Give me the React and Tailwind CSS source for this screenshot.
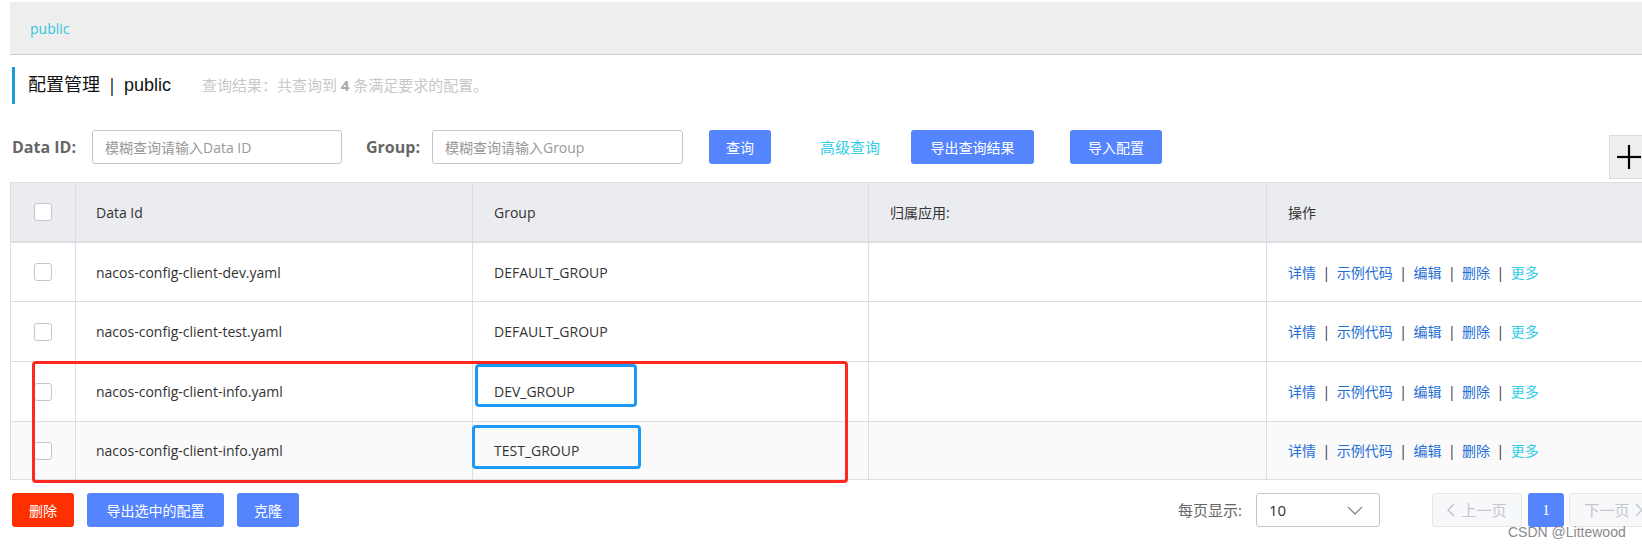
import React from "react";

const rows = [
  { id: "nacos-config-client-dev.yaml", group: "DEFAULT_GROUP", h: "h-[59px]", bg: "bg-white" },
  { id: "nacos-config-client-test.yaml", group: "DEFAULT_GROUP", h: "h-[60px]", bg: "bg-white" },
  { id: "nacos-config-client-info.yaml", group: "DEV_GROUP", h: "h-[60px]", bg: "bg-white" },
  { id: "nacos-config-client-info.yaml", group: "TEST_GROUP", h: "h-[58px]", bg: "bg-[#fafafa]" },
];

const Checkbox = () => (
  <span className="block w-[18px] h-[18px] rounded-[3px] border border-[#c4c6cf] bg-white" />
);

const Sep = () => <span className="mx-[6.5px] text-[#333]">|</span>;

const Actions = () => (
  <div className="flex items-center whitespace-nowrap text-[14px] text-[#1f6fd6]">
    <span>详情</span>
    <Sep />
    <span>示例代码</span>
    <Sep />
    <span>编辑</span>
    <Sep />
    <span>删除</span>
    <Sep />
    <span className="text-[#33cde5]">更多</span>
  </div>
);

const Btn = ({ children, className }) => (
  <button className={"shrink-0 whitespace-nowrap h-[34px] rounded-[3px] text-white text-[14px] " + className}>{children}</button>
);

export default function App() {
  return (
    <div className="relative w-[1642px] h-[546px] overflow-hidden bg-white [font-family:'Open_Sans','Noto_Sans_CJK_SC',sans-serif]">
      <div className="pt-[2px] pl-[10px]">
        {/* namespace bar */}
        <div className="h-[53px] bg-[#eeeeee] border-b border-[#cccccc] flex items-center pl-[20px]">
          <span className="text-[14px] text-[#33c3e0]">public</span>
        </div>

        {/* title */}
        <div className="mt-[12px] ml-[2px] h-[37px] border-l-[3px] border-[#1a9ed8] flex items-center pl-[13px] whitespace-nowrap">
          <span className="text-[18px] text-[#111] [font-family:'Liberation_Sans','Noto_Sans_CJK_SC',sans-serif]">配置管理</span>
          <span className="text-[18px] text-[#111] mx-[7px]">|</span>
          <span className="text-[18px] text-[#111] [font-family:'Liberation_Sans',sans-serif]">public</span>
          <span className="ml-[31px] text-[15px] text-[#c8c8c8]">
            查询结果：共查询到 <b className="text-[#aaa]">4</b> 条满足要求的配置。
          </span>
        </div>

        {/* search row */}
        <div className="mt-[26px] flex items-center h-[34px] whitespace-nowrap">
          <span className="shrink-0 ml-[2px] text-[16px] font-bold text-[#666]">Data ID:</span>
          <div className="shrink-0 ml-[16px] w-[250px] h-[34px] border border-[#c4c6cf] rounded-[3px] flex items-center pl-[12px] text-[14px] text-[#999]">
            模糊查询请输入Data ID
          </div>
          <span className="shrink-0 ml-[24px] text-[16px] font-bold text-[#666]">Group:</span>
          <div className="shrink-0 ml-[12px] w-[251px] h-[34px] border border-[#c4c6cf] rounded-[3px] flex items-center pl-[12px] text-[14px] text-[#999]">
            模糊查询请输入Group
          </div>
          <Btn className="ml-[26px] w-[62px] bg-[#5584ff]">查询</Btn>
          <span className="shrink-0 ml-[49px] text-[15px] text-[#33cde5]">高级查询</span>
          <Btn className="ml-[31px] w-[123px] bg-[#5584ff]">导出查询结果</Btn>
          <Btn className="ml-[36px] w-[92px] bg-[#5584ff]">导入配置</Btn>
        </div>

        {/* table */}
        <div className="mt-[18px] w-[1700px] border-t border-l border-[#dcdee3] text-[14px] text-[#333]">
          <div className="grid grid-cols-[65px_397px_396px_398px_398px] h-[60px] bg-[#ebecf0] border-b-2 border-[#dcdee3]">
            <div className="border-r border-[#dcdee3] flex items-center justify-center"><Checkbox /></div>
            <div className="border-r border-[#dcdee3] flex items-center pl-[20px]">Data Id</div>
            <div className="border-r border-[#dcdee3] flex items-center pl-[21px]">Group</div>
            <div className="border-r border-[#dcdee3] flex items-center pl-[21px]">归属应用:</div>
            <div className="flex items-center pl-[21px]">操作</div>
          </div>
          {rows.map((r, i) => (
            <div key={i} className={"grid grid-cols-[65px_397px_396px_398px_398px] border-b border-[#dcdee3] " + r.h + " " + r.bg}>
              <div className="border-r border-[#dcdee3] flex items-center justify-center"><Checkbox /></div>
              <div className="border-r border-[#dcdee3] flex items-center pl-[20px]">{r.id}</div>
              <div className="border-r border-[#dcdee3] flex items-center pl-[21px]">{r.group}</div>
              <div className="border-r border-[#dcdee3]" />
              <div className="flex items-center pl-[21px]"><Actions /></div>
            </div>
          ))}
        </div>

        {/* footer */}
        <div className="mt-[13px] flex items-center whitespace-nowrap">
          <Btn className="ml-[2px] w-[62px] bg-[#ff3000]">删除</Btn>
          <Btn className="ml-[13px] w-[137px] bg-[#5584ff]">导出选中的配置</Btn>
          <Btn className="ml-[13px] w-[62px] bg-[#5584ff]">克隆</Btn>
          <span className="shrink-0 ml-[879px] text-[15px] text-[#666]">每页显示:</span>
          <div className="shrink-0 ml-[14px] w-[124px] h-[34px] border border-[#c4c6cf] rounded-[3px] flex items-center justify-between pl-[12px] pr-[16px] text-[15px] text-[#333]">
            <span>10</span>
            <svg width="16" height="9" viewBox="0 0 16 9" fill="none" stroke="#888" strokeWidth="1.3">
              <polyline points="1,1 8,8 15,1" />
            </svg>
          </div>
          <div className="shrink-0 ml-[52px] w-[90px] h-[34px] border border-[#e6e7eb] bg-[#f7f8fa] rounded-[3px] flex items-center justify-center gap-[6px] text-[15px] text-[#c4c6cf]">
            <svg width="8" height="14" viewBox="0 0 8 14" fill="none" stroke="#c4c6cf" strokeWidth="1.5">
              <polyline points="7,1 1,7 7,13" />
            </svg>
            <span>上一页</span>
          </div>
          <div className="shrink-0 ml-[6px] w-[36px] h-[34px] rounded-[3px] bg-[#5584ff] text-white text-[15px] flex items-center justify-center [font-family:'Liberation_Serif',serif]">1</div>
          <div className="shrink-0 ml-[5px] w-[90px] h-[34px] border border-[#e6e7eb] bg-[#f7f8fa] rounded-[3px] flex items-center justify-center gap-[6px] text-[15px] text-[#c4c6cf]">
            <span>下一页</span>
            <svg width="8" height="14" viewBox="0 0 8 14" fill="none" stroke="#c4c6cf" strokeWidth="1.5">
              <polyline points="1,1 7,7 1,13" />
            </svg>
          </div>
        </div>
      </div>

      {/* floating plus */}
      <div className="absolute left-[1609px] top-[135px] w-[40px] h-[44px] bg-[#eeeeee] border border-[#dddddd] flex items-center justify-center">
        <svg width="26" height="26" viewBox="0 0 26 26" stroke="#000" strokeWidth="2.2">
          <line x1="13" y1="1" x2="13" y2="25" />
          <line x1="1" y1="13" x2="25" y2="13" />
        </svg>
      </div>

      {/* annotations */}
      <div className="absolute left-[32px] top-[361px] w-[816px] h-[122px] border-[3px] border-[#ff2a1f] rounded-[4px]" />
      <div className="absolute left-[475px] top-[364px] w-[162px] h-[43px] border-[3px] border-[#1e98f5] rounded-[4px]" />
      <div className="absolute left-[472px] top-[425px] w-[169px] h-[44px] border-[3px] border-[#1e98f5] rounded-[4px]" />

      {/* watermark */}
      <div className="absolute left-[1508px] top-[524px] whitespace-nowrap text-[14px] leading-[16px] text-[#8a8a8a] [font-family:'Liberation_Sans',sans-serif]">
        CSDN @Littewood
      </div>
    </div>
  );
}
